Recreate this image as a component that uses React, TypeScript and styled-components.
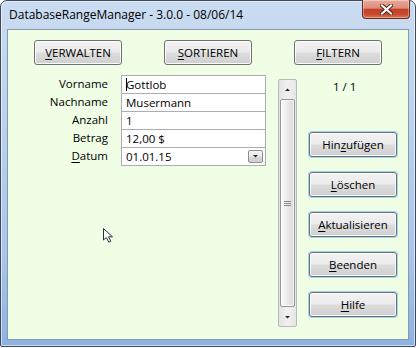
import React from 'react';
import styled, { createGlobalStyle } from 'styled-components';

const GlobalStyle = createGlobalStyle`
  html, body { margin: 0; padding: 0; background: #ffffff; }
  body {
    font-family: 'Open Sans', 'Noto Sans', 'Liberation Sans', sans-serif;
    font-size: 11.5px;
    color: #000000;
  }
  #root { width: 416px; height: 348px; }
`;

const Window = styled.div`
  position: relative;
  box-sizing: border-box;
  width: 416px;
  height: 347px;
  display: flex;
  flex-direction: column;
  padding: 0 6px 6px 6px;
  border: 1px solid #3e4a5b;
  border-radius: 7px 7px 2px 2px;
  background: linear-gradient(to bottom, #cadcf1 0%, #bdd4ee 30%, #a9c5e9 75%, #8eb1e0 100%);
  box-shadow: inset 0 0 0 1px rgba(255, 255, 255, 0.55);
`;

const TitleBar = styled.div`
  height: 28px;
  display: flex;
  align-items: flex-start;
  justify-content: space-between;
`;

const Title = styled.span`
  margin: 6px 0 0 2px;
  line-height: 16px;
  font-size: 12px;
`;

const CloseButton = styled.div`
  box-sizing: border-box;
  width: 48px;
  height: 19px;
  margin: -1px -1px 0 0;
  display: flex;
  align-items: center;
  justify-content: center;
  border: 1px solid #6a2a1c;
  border-top: none;
  border-radius: 0 0 4px 4px;
  background: linear-gradient(to bottom, #e8ab9c 0%, #dc8c7a 45%, #c63f25 52%, #c9492e 80%, #d9785b 100%);
  box-shadow: inset 0 0 0 1px rgba(255, 255, 255, 0.35);
`;

const Client = styled.div`
  position: relative;
  flex: 1;
  display: flex;
  flex-direction: column;
  border: 1px solid #8598ae;
  background: #f0fee6;
`;

const TopRow = styled.div`
  display: flex;
  gap: 42px;
  padding: 10px 0 0 26px;
`;

const Button = styled.button<{ $glow?: boolean }>`
  box-sizing: border-box;
  width: 88px;
  height: 25px;
  padding: 0;
  font-family: inherit;
  font-size: 11.5px;
  color: #000000;
  border: 1px solid #707070;
  border-radius: 3px;
  background: linear-gradient(to bottom, #f2f2f2 0%, #ebebeb 48%, #dddddd 52%, #cfcfcf 100%);
  box-shadow: inset 0 0 0 1px #fbfbfb${(p) => (p.$glow ? ', 0 0 0 1px #97d7f4' : '')};
`;

const Key = styled.span`
  text-decoration: underline;
  text-underline-offset: 2px;
  text-decoration-thickness: 1px;
`;

const Main = styled.div`
  display: flex;
  align-items: flex-start;
  margin-top: 10px;
`;

const Form = styled.div`
  display: grid;
  grid-template-columns: 80px 145px;
  grid-auto-rows: 18px;
  column-gap: 13px;
  margin-left: 20px;
`;

const Label = styled.div`
  text-align: right;
  line-height: 17px;
  font-size: 11.5px;
`;

const Field = styled.div`
  box-sizing: border-box;
  height: 19px;
  display: flex;
  align-items: center;
  padding-left: 4px;
  border: 1px solid #abadb3;
  background: #ffffff;
  font-size: 11.5px;
  line-height: 16px;
`;

const Caret = styled.span`
  display: inline-block;
  width: 1px;
  height: 13px;
  margin-right: -1px;
  background: #000000;
`;

const DropButton = styled.span`
  box-sizing: border-box;
  width: 15px;
  height: 13px;
  margin-left: auto;
  margin-right: 2px;
  display: flex;
  align-items: center;
  justify-content: center;
  border: 1px solid #8e8f8f;
  border-radius: 2px;
  background: linear-gradient(to bottom, #f4f4f4 0%, #e8e8e8 50%, #d9d9d9 51%, #cfcfcf 100%);
`;

const Scrollbar = styled.div`
  box-sizing: border-box;
  width: 19px;
  height: 248px;
  margin: 4px 0 0 12px;
  display: flex;
  flex-direction: column;
  border: 1px solid #b9b9b9;
  border-radius: 2px;
  background: linear-gradient(to right, #e3e3e3 0%, #f1f1f1 50%, #e6e6e6 100%);
`;

const ScrollArrow = styled.div`
  height: 18px;
  display: flex;
  align-items: center;
  justify-content: center;
`;

const Thumb = styled.div`
  flex: 1;
  margin: 1px;
  display: flex;
  align-items: center;
  justify-content: center;
  border: 1px solid #979797;
  border-radius: 2px;
  background: linear-gradient(to right, #fafafa 0%, #ececec 45%, #dadada 100%);
  box-shadow: inset 0 0 0 1px rgba(255, 255, 255, 0.7);
`;

const RightColumn = styled.div`
  width: 88px;
  margin-left: 12px;
  display: flex;
  flex-direction: column;
`;

const Counter = styled.div`
  margin: 4px 0 0 24px;
  line-height: 16px;
  font-size: 11.5px;
`;

const ButtonStack = styled.div`
  display: flex;
  flex-direction: column;
  gap: 15px;
  margin-top: 37px;
`;

const Cursor = styled.svg`
  position: absolute;
  left: 95px;
  top: 198px;
`;

const Triangle = ({ up, small }: { up?: boolean; small?: boolean }) => (
  <svg width={small ? 5 : 7} height={small ? 3 : 4} viewBox="0 0 7 4">
    <path d={up ? 'M0 4 L3.5 0.5 L7 4 Z' : 'M0 0 L3.5 3.5 L7 0 Z'} fill="#262626" />
  </svg>
);

const rows: { label: React.ReactNode; value: React.ReactNode }[] = [
  { label: 'Vorname', value: <><Caret />Gottlob</> },
  { label: 'Nachname', value: 'Musermann' },
  { label: 'Anzahl', value: '1' },
  { label: 'Betrag', value: '12,00 $' },
];

export default function App() {
  return (
    <>
      <GlobalStyle />
      <Window>
        <TitleBar>
          <Title>DatabaseRangeManager - 3.0.0 - 08/06/14</Title>
          <CloseButton>
            <svg width="13" height="11" viewBox="0 0 13 11">
              <path d="M2 1.5 L11 9.5 M11 1.5 L2 9.5" stroke="#4a2218" strokeWidth="4" strokeLinecap="square" />
              <path d="M2 1.5 L11 9.5 M11 1.5 L2 9.5" stroke="#ffffff" strokeWidth="2.2" strokeLinecap="square" />
            </svg>
          </CloseButton>
        </TitleBar>
        <Client>
          <TopRow>
            <Button><Key>V</Key>ERWALTEN</Button>
            <Button><Key>S</Key>ORTIEREN</Button>
            <Button><Key>F</Key>ILTERN</Button>
          </TopRow>
          <Main>
            <Form>
              {rows.map((r, i) => (
                <React.Fragment key={i}>
                  <Label>{r.label}</Label>
                  <Field>{r.value}</Field>
                </React.Fragment>
              ))}
              <Label><Key>D</Key>atum</Label>
              <Field>
                01.01.15
                <DropButton><Triangle small /></DropButton>
              </Field>
            </Form>
            <Scrollbar>
              <ScrollArrow><Triangle up small /></ScrollArrow>
              <Thumb>
                <svg width="7" height="7" viewBox="0 0 7 7">
                  <path d="M0 1.5 H7 M0 3.5 H7 M0 5.5 H7" stroke="#8a8a8a" strokeWidth="1" />
                </svg>
              </Thumb>
              <ScrollArrow><Triangle small /></ScrollArrow>
            </Scrollbar>
            <RightColumn>
              <Counter>1 / 1</Counter>
              <ButtonStack>
                <Button $glow>Hin<Key>z</Key>ufügen</Button>
                <Button $glow><Key>L</Key>öschen</Button>
                <Button $glow><Key>A</Key>ktualisieren</Button>
                <Button $glow><Key>B</Key>eenden</Button>
                <Button $glow><Key>H</Key>ilfe</Button>
              </ButtonStack>
            </RightColumn>
          </Main>
          <Cursor width="13" height="15" viewBox="0 0 13 15">
            <path
              d="M0.5 0.5 L0.5 12 L3.3 9.5 L5.8 14.2 L7.8 13.3 L5.5 8.8 L9.5 8.8 Z"
              fill="#ffffff"
              stroke="#2a313b"
              strokeWidth="1"
              strokeLinejoin="miter"
            />
          </Cursor>
        </Client>
      </Window>
    </>
  );
}
